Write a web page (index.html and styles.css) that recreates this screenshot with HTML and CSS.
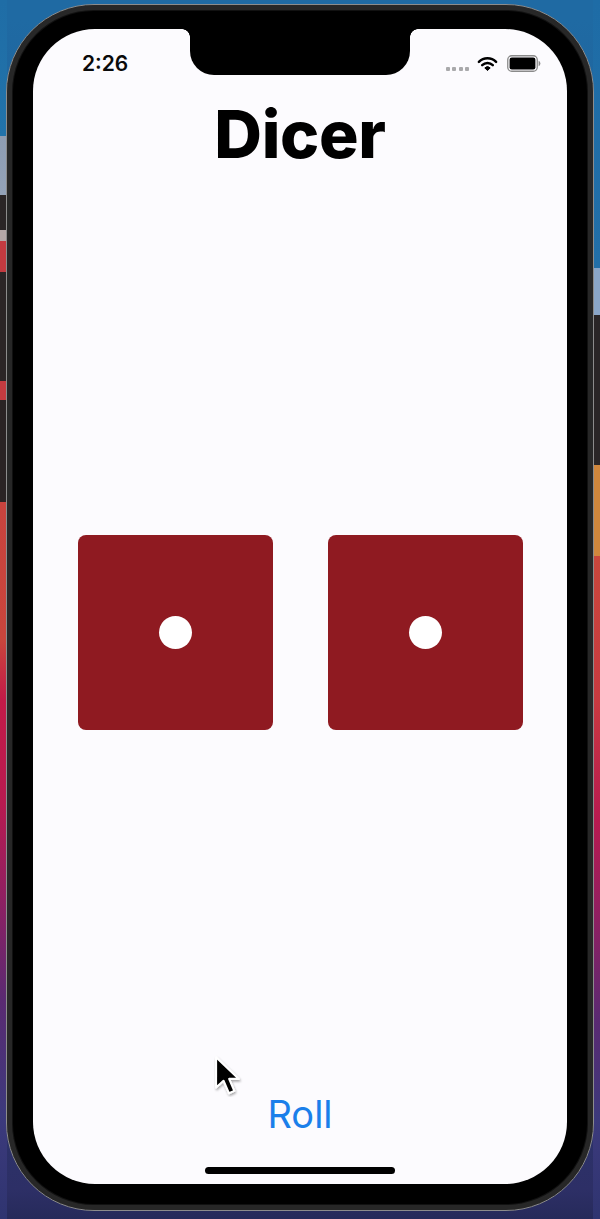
FILE: index.html
```html
<!DOCTYPE html>
<html lang="en">
<head>
<meta charset="utf-8">
<title>Dicer</title>
<link rel="stylesheet" href="styles.css">
</head>
<body>
  <div class="device">
    <div class="screen">
      <div class="notch"></div>
      <div class="status">
        <span class="time">2:26</span>
        <div class="status-icons">
          <div class="signal"><i></i><i></i><i></i><i></i></div>
          <svg class="wifi" width="21" height="15" viewBox="0 0 21 15">
            <path d="M1.9 5.9 A12.2 12.2 0 0 1 19.1 5.9" fill="none" stroke="#000" stroke-width="2.5" stroke-linecap="round"/>
            <path d="M5.2 9.1 A7.6 7.6 0 0 1 15.8 9.1" fill="none" stroke="#000" stroke-width="2.5" stroke-linecap="round"/>
            <path d="M10.5 14.6 L7.8 11.9 A3.8 3.8 0 0 1 13.2 11.9 Z" fill="#000" stroke="#000" stroke-width="1" stroke-linejoin="round"/>
          </svg>
          <svg class="battery" width="34" height="17" viewBox="0 0 34 17">
            <rect x="0.75" y="0.75" width="29.5" height="15.5" rx="4" fill="none" stroke="#8a8a8a" stroke-width="1.3"/>
            <rect x="2.6" y="2.6" width="25.8" height="11.8" rx="2.2" fill="#000"/>
            <path d="M31.6 5.8 Q33.4 6.3 33.4 8.5 Q33.4 10.7 31.6 11.2 Z" fill="#8a8a8a"/>
          </svg>
        </div>
      </div>
      <h1 class="title">Dicer</h1>
      <div class="dice">
        <div class="die"><span class="pip"></span></div>
        <div class="die"><span class="pip"></span></div>
      </div>
      <div class="roll">Roll</div>
      <div class="home-indicator"></div>
      <svg class="cursor" width="29" height="42" viewBox="0 0 14 20">
        <defs>
          <filter id="sh" x="-30%" y="-30%" width="160%" height="160%">
            <feDropShadow dx="0.4" dy="0.8" stdDeviation="0.6" flood-color="#000" flood-opacity="0.35"/>
          </filter>
        </defs>
        <path d="M1 1 L1 15.6 L4.6 12.3 L7.2 18.3 L9.8 17.2 L7.3 11.4 L12 11.4 Z" fill="#000" stroke="#fff" stroke-width="1" stroke-linejoin="round" filter="url(#sh)"/>
      </svg>
    </div>
  </div>
</body>
</html>
```

FILE: styles.css
```css
* { box-sizing: border-box; }

html, body {
  margin: 0;
  padding: 0;
}

body {
  width: 600px;
  height: 1219px;
  overflow: hidden;
  font-family: Inter, "Liberation Sans", sans-serif;
  background:
    linear-gradient(to bottom,
      #1f6da6 0, #2273aa 136px, #8e9db2 136px, #93a2b8 195px,
      #2a2526 195px, #2a2526 230px, #b5a8a8 230px, #b5a8a8 241px,
      #c23a40 241px, #c23a40 272px, #2b2526 272px, #2b2526 381px,
      #c43b40 381px, #c43b40 400px, #2a2324 400px, #2a2324 502px,
      #c8433e 502px, #c9453c 640px, #c21a48 700px, #b81a50 803px,
      #8e2062 900px, #5a2a72 1000px, #3c3a7c 1115px, #2f3470 1219px) left top / 7px 100% no-repeat,
    linear-gradient(to bottom,
      #1e6ca6 0, #226fa8 268px, #8aa6c8 268px, #8aa6c8 315px,
      #2a2627 315px, #2a2627 465px, #d0873c 465px, #d0873c 556px,
      #c9473c 556px, #c83a40 700px, #b81a50 820px, #8e2062 920px,
      #5a2a72 1020px, #3c3a7c 1120px, #2f3470 1219px) right top / 7px 100% no-repeat,
    linear-gradient(to bottom, #1f6aa3 0, #1f6aa3 20px, #2d2f66 1190px, #262a5a 1219px);
  padding: 4px 6px 8px;
}

.device {
  width: 588px;
  height: 1207px;
  border: 1px solid #8c8c8c;
  border-radius: 88px;
  background: #000;
  box-shadow: inset 0 0 0 5px #272727, inset 0 0 0 6px #111;
  padding: 24px 26px 26px;
}

.screen {
  position: relative;
  width: 534px;
  height: 1155px;
  border-radius: 62px;
  background: #fcfbfe;
  overflow: hidden;
  display: flex;
  flex-direction: column;
  align-items: center;
}

.notch {
  position: absolute;
  top: 0;
  left: 157px;
  width: 220px;
  height: 46px;
  background: #000;
  border-radius: 0 0 24px 24px;
}

.notch::before,
.notch::after {
  content: "";
  position: absolute;
  top: 0;
  width: 8px;
  height: 8px;
}

.notch::before {
  left: -8px;
  background: radial-gradient(circle at 0 100%, transparent 7.5px, #000 8px);
}

.notch::after {
  right: -8px;
  background: radial-gradient(circle at 100% 100%, transparent 7.5px, #000 8px);
}

.status {
  width: 100%;
  height: 28px;
  margin-top: 20px;
  padding: 0 26px 0 49px;
  display: flex;
  align-items: center;
  justify-content: space-between;
}

.time {
  font-size: 21px;
  font-weight: 600;
  color: #0a0a0a;
  letter-spacing: 0;
}

.status-icons {
  display: flex;
  align-items: center;
}

.signal {
  display: flex;
  gap: 2.4px;
  margin-top: 12px;
  margin-right: 8px;
}

.signal i {
  display: block;
  width: 4px;
  height: 4px;
  border-radius: 1px;
  background: #a9a9ab;
}

.wifi {
  display: block;
  margin-right: 9px;
}

.battery {
  display: block;
}

.title {
  margin: 25px 0 0;
  font-size: 66px;
  line-height: 64px;
  font-weight: 800;
  color: #000;
  letter-spacing: -0.3px;
}

.dice {
  margin-top: 369px;
  display: flex;
  gap: 55px;
}

.die {
  width: 195px;
  height: 195px;
  border-radius: 8px;
  background: #8f1a21;
  display: flex;
  align-items: center;
  justify-content: center;
}

.pip {
  display: block;
  width: 33px;
  height: 33px;
  border-radius: 50%;
  background: #fff;
}

.roll {
  margin-top: 365px;
  font-size: 38px;
  line-height: 38px;
  font-weight: 400;
  color: #1b7fea;
}

.home-indicator {
  margin-top: 34px;
  width: 190px;
  height: 7px;
  border-radius: 4px;
  background: #000;
}

.cursor {
  position: absolute;
  left: 181px;
  top: 1026px;
}
```
